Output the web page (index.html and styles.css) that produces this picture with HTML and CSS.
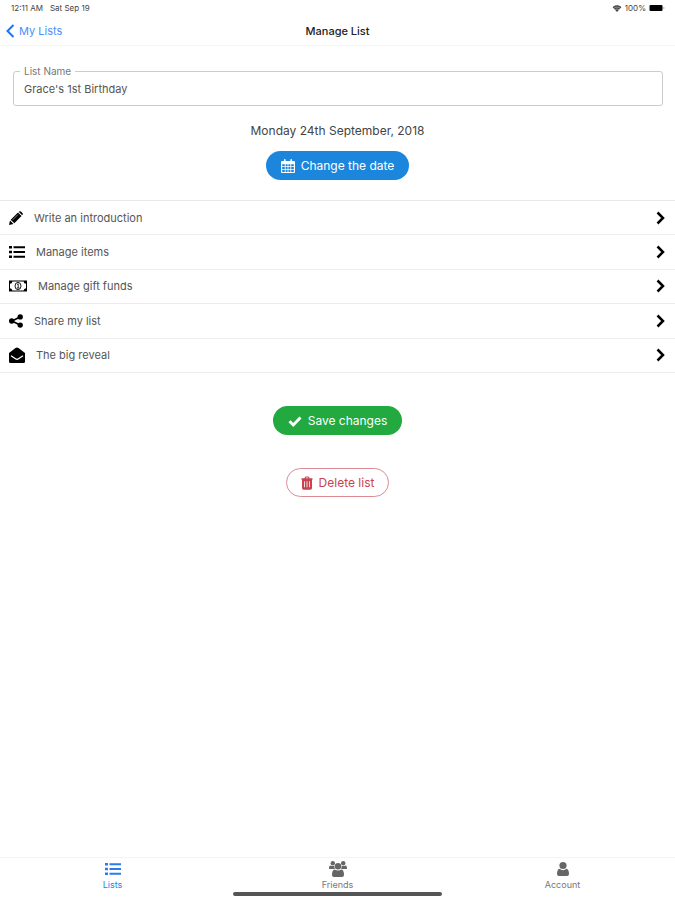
FILE: index.html
```html
<!DOCTYPE html>
<html lang="en">
<head>
    <meta charset="UTF-8">
    <meta name="viewport" content="width=device-width, initial-scale=1.0">
    <title>Manage List</title>
    <link rel="stylesheet" href="styles.css">
</head>
<body>

    <div class="status-bar">
        <span>12:11 AM</span>
        <span>Sat Sep 19</span>
        <span class="status-right">
            <svg class="wifi" viewBox="0 0 10 8"><path d="M0 2.6C3-.4 7-.4 10 2.6L5 8z"/><path d="M1 4C3.500 1.800 6.500 1.800 9 4M2.500 5.600C4 4.300 6 4.300 7.500 5.600" fill="none" stroke="#fff" stroke-width=".5"/></svg>
            <span>100%</span>
            <svg class="battery" viewBox="0 0 16 8"><rect x=".5" y="1" width="13" height="6" rx="1"/><path d="M14.500 3v2q1-.3 1-1t-1-1z" fill="#888"/></svg>
        </span>
    </div>

    <header class="header">
        <a class="back" href="#">
            <svg viewBox="0 0 9 14"><path d="M7.500 1L1.500 7l6 6" fill="none" stroke="currentColor" stroke-width="2"/></svg>
            My Lists
        </a>
        <h1>Manage List</h1>
    </header>

    <main>
        <form class="list-form">
            <div class="field">
                <label for="listName">List Name</label>
                <input type="text" id="listName" name="listName" value="Grace's 1st Birthday">
            </div>

            <p class="date">Monday 24th September, 2018</p>
            <button type="button" class="btn btn-date">
                <svg viewBox="0 0 14 14"><path fill-rule="evenodd" d="M1 2h2V.8Q3 0 3.800 0t.8.8V2h4.800V.8q0-.8.8-.8t.8.8V2h2q1 0 1 1v10q0 1-1 1H1q-1 0-1-1V3q0-1 1-1zM1.200 5.200v2h2.600v-2zM4.600 5.200v2h2v-2zM7.400 5.200v2h2v-2zM10.200 5.200v2h2.600v-2zM1.200 8v2h2.600V8zM4.600 8v2h2V8zM7.400 8v2h2V8zM10.200 8v2h2.600V8zM1.200 10.800V13h2.600v-2.200zM4.600 10.800V13h2v-2.200zM7.400 10.800V13h2v-2.200zM10.200 10.800V13h2.600v-2.200z"/></svg>
                Change the date
            </button>

            <nav class="options">
                <a href="#">
                    <svg class="icon-narrow" viewBox="0 0 14 14"><path d="M0 14l1-4.500 3.500 3.500zM1.700 8.700L9 1.500 12.500 5l-7.200 7.300zM9.700.8q1-1.200 2.200-.2l1.500 1.500q1 1.100-.2 2.200z"/><path d="M3.500 9L9 3.500" stroke="#fff" stroke-width=".5"/></svg>
                    <span>Write an introduction</span>
                    <svg class="chevron" viewBox="0 0 9 14"><path d="M1.500 1.500L7 7l-5.500 5.500"/></svg>
                </a>
                <a href="#">
                    <svg viewBox="0 0 16 14"><path d="M0 1h3v2.600H0zM0 5.700h3v2.600H0zM0 10.400h3V13H0zM4.500 1.300H16v2H4.500zM4.500 6H16v2H4.500zM4.500 10.700H16v2H4.500z"/></svg>
                    <span>Manage items</span>
                    <svg class="chevron" viewBox="0 0 9 14"><path d="M1.500 1.500L7 7l-5.500 5.500"/></svg>
                </a>
                <a href="#">
                    <svg class="icon-wide" viewBox="0 0 18 14"><path fill-rule="evenodd" d="M0 1.500h18v11H0zM3.400 2.400Q3.200 4.500 1 4.700v4.600q2.200.2 2.400 2.300h11.200q.2-2.100 2.400-2.300V4.700q-2.200-.2-2.400-2.300z"/><ellipse cx="9" cy="7" rx="3" ry="3.600" fill="none" stroke="#000" stroke-width=".9"/><path d="M8 5.600L9.200 4.800V9M7.800 9h2.700" fill="none" stroke="#000" stroke-width=".8"/></svg>
                    <span>Manage gift funds</span>
                    <svg class="chevron" viewBox="0 0 9 14"><path d="M1.500 1.500L7 7l-5.500 5.500"/></svg>
                </a>
                <a href="#">
                    <svg class="icon-narrow" viewBox="0 0 14 14"><path d="M11 3L3 7l8 4" fill="none" stroke="#000" stroke-width="1.700"/><circle cx="11.200" cy="2.900" r="2.700"/><circle cx="2.700" cy="7" r="2.700"/><circle cx="11.200" cy="11.100" r="2.700"/></svg>
                    <span>Share my list</span>
                    <svg class="chevron" viewBox="0 0 9 14"><path d="M1.500 1.500L7 7l-5.500 5.500"/></svg>
                </a>
                <a href="#">
                    <svg class="icon-tall" viewBox="0 0 16 16"><path d="M0 6L6.500 1Q8 0 9.500 1L16 6v8.500q0 1.500-1.500 1.500h-13Q0 16 0 14.500z"/><path d="M2 8.800l4.500 3q1.500 1 3 0l4.500-3" fill="none" stroke="#fff" stroke-width="1.300"/></svg>
                    <span>The big reveal</span>
                    <svg class="chevron" viewBox="0 0 9 14"><path d="M1.500 1.500L7 7l-5.500 5.500"/></svg>
                </a>
            </nav>

            <button type="submit" class="btn btn-save">
                <svg viewBox="0 0 14 14"><path d="M1.500 7.200L5.300 11l7.200-7.500" fill="none" stroke="currentColor" stroke-width="2.900"/></svg>
                Save changes
            </button>
            <button type="button" class="btn btn-delete">
                <svg viewBox="0 0 12 14"><path fill-rule="evenodd" d="M.5 2.300h3L4 1q.2-.6 1-.6h2q.8 0 1 .6l.5 1.300h3v1.400H11V12q0 1.700-1.500 1.700h-7Q1 13.700 1 12V3.700H.5zM4.700 2.300h2.600L7 1.400H5zM3.200 5.300v6h.8v-6zM5.600 5.300v6h.8v-6zM8 5.300v6h.8v-6z"/></svg>
                Delete list
            </button>
        </form>
    </main>

    <footer class="tab-bar">
        <nav class="tabs">
            <a href="#" class="active">
                <svg viewBox="0 0 16 14"><path d="M0 1h3v2.600H0zM0 5.700h3v2.600H0zM0 10.400h3V13H0zM4.500 1.300H16v2H4.500zM4.500 6H16v2H4.500zM4.500 10.700H16v2H4.500z"/></svg>
                Lists
            </a>
            <a href="#">
                <svg class="icon-friends" viewBox="0 0 18 16"><circle cx="3.800" cy="2.200" r="2.200"/><circle cx="14.200" cy="2.200" r="2.200"/><circle cx="9" cy="5.300" r="3.200"/><path d="M0 7.500Q0 4.500 1.500 4.500 3.500 5.600 5.300 4.700 5.300 7 6 8H1.500Q0 8 0 7.500zM18 7.500q0-3-1.500-3-2 1.100-3.800.2 0 2.300-.7 3.300h4.500Q18 8 18 7.500zM5.500 8.500q3.500 1.800 7 0Q15 9 15 14q0 2-2 2H5q-2 0-2-2 0-5 2.500-5.500z"/></svg>
                Friends
            </a>
            <a href="#">
                <svg viewBox="0 0 16 16"><circle cx="8" cy="4.500" r="3.600"/><path d="M4.500 7.800Q8 10.500 11.500 7.800 14 8.500 14 13q0 2-2 2H4q-2 0-2-2 0-4.500 2.500-5.200z"/></svg>
                Account
            </a>
        </nav>
        <div class="home-indicator"></div>
    </footer>

</body>
</html>
```
FILE: styles.css
```css
* {
    box-sizing: border-box;
}

body {
    font-family: Inter, "Liberation Sans", sans-serif;
    font-size: 11px;
    margin: 0;
    background: #fff;
    color: #555;
    min-height: 100vh;
    display: flex;
    flex-direction: column;
}

a {
    color: inherit;
    text-decoration: none;
}

svg {
    fill: currentColor;
    flex: none;
}

/* Status bar */
.status-bar {
    display: flex;
    align-items: center;
    gap: 7px;
    height: 16px;
    padding: 0 10px 0 11px;
    font-size: 8px;
    color: #444;
}

.status-right {
    display: flex;
    align-items: center;
    gap: 3px;
    margin-left: auto;
}

.wifi {
    width: 10px;
    height: 7px;
}

.battery {
    width: 16px;
    height: 8px;
    color: #000;
}

/* Header */
.header {
    display: grid;
    grid-template-columns: 1fr auto 1fr;
    align-items: center;
    height: 30px;
    padding: 0 6px;
    border-bottom: 1px solid #f6f6f6;
}

.header h1 {
    margin: 0;
    font-size: 11px;
    font-weight: 500;
    color: #222;
}

.back {
    display: flex;
    align-items: center;
    gap: 4px;
    color: #4c8dff;
}

.back svg {
    width: 9px;
    height: 14px;
    color: #1a75f0;
}

/* Form */
main {
    flex: 1;
}

.list-form {
    display: flex;
    flex-direction: column;
    align-items: center;
    padding-top: 25px;
}

.field {
    position: relative;
    align-self: stretch;
    margin: 0 12px 0 13px;
}

.field label {
    position: absolute;
    top: -7px;
    left: 7px;
    padding: 0 4px;
    font-size: 10px;
    line-height: 14px;
    background: #fff;
    color: #777;
}

.field input {
    display: block;
    width: 100%;
    height: 35px;
    padding: 0 10px;
    border: 1px solid #ccc;
    border-radius: 3px;
    font: inherit;
    color: #555;
    background: #fff;
}

.date {
    margin: 17px 0 12px;
    font-size: 12px;
    line-height: 16px;
    color: #444;
}

.btn {
    display: flex;
    align-items: center;
    gap: 6px;
    height: 29px;
    padding: 0 14px;
    border: 1px solid transparent;
    border-radius: 15px;
    font: inherit;
    font-size: 12px;
    color: #fff;
    cursor: pointer;
}

.btn svg {
    width: 14px;
    height: 14px;
}

.btn-date {
    background: #1c86dd;
}

.btn-save {
    margin-top: 33px;
    background: #22a93f;
}

.btn-delete {
    margin-top: 33px;
    background: #fff;
    border-color: #dc8b94;
    color: #c9434f;
}

.btn-delete svg {
    width: 12px;
}

/* Options */
.options {
    align-self: stretch;
    display: grid;
    grid-auto-rows: 1fr;
    min-height: 173px;
    margin-top: 20px;
    border-top: 1px solid #e8e8e8;
}

.options a {
    display: flex;
    align-items: center;
    gap: 11px;
    padding: 0 10px 0 9px;
    border-bottom: 1px solid #ececec;
}

.options svg {
    width: 16px;
    height: 14px;
    color: #000;
}

.options .icon-narrow {
    width: 14px;
}

.options .icon-wide {
    width: 18px;
}

.options .icon-tall {
    height: 16px;
}

.options .chevron {
    width: 9px;
    margin-left: auto;
    fill: none;
    stroke: #000;
    stroke-width: 2.5;
}

/* Tab bar */
.tab-bar {
    border-top: 1px solid #f4f4f4;
    padding-bottom: 4px;
}

.tabs {
    display: grid;
    grid-template-columns: repeat(3, 1fr);
}

.tabs a {
    display: flex;
    flex-direction: column;
    align-items: center;
    gap: 2px;
    padding-top: 3px;
    font-size: 9px;
    line-height: 12px;
    color: #777;
}

.tabs svg {
    width: 16px;
    height: 16px;
    color: #666;
}

.tabs .icon-friends {
    width: 18px;
}

.tabs .active,
.tabs .active svg {
    color: #2c7cf0;
}

.home-indicator {
    width: 31%;
    height: 4px;
    margin: 1px auto 0;
    border-radius: 2px;
    background: #555;
}
```
